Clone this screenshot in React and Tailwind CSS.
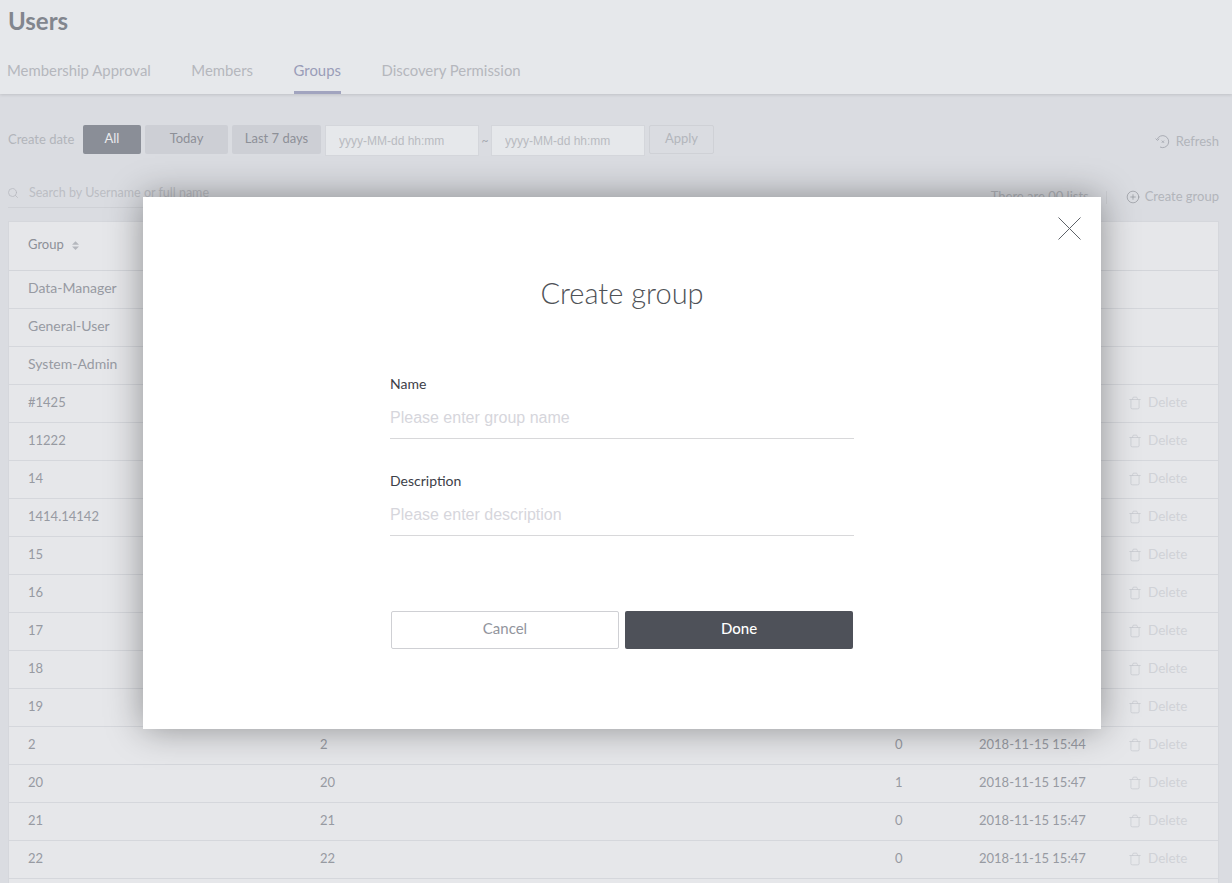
import { Search, CirclePlus, Trash } from 'lucide-react';

const tabs = ['Membership Approval', 'Members', 'Groups', 'Discovery Permission'];

const rows = [
  { name: 'Data-Manager', fixed: true },
  { name: 'General-User', fixed: true },
  { name: 'System-Admin', fixed: true },
  { name: '#1425' },
  { name: '11222' },
  { name: '14' },
  { name: '1414.14142' },
  { name: '15' },
  { name: '16' },
  { name: '17' },
  { name: '18' },
  { name: '19' },
  { name: '2', count: 0, date: '2018-11-15 15:44' },
  { name: '20', count: 1, date: '2018-11-15 15:47' },
  { name: '21', count: 0, date: '2018-11-15 15:47' },
  { name: '22', count: 0, date: '2018-11-15 15:47' },
];

function RefreshIcon() {
  return (
    <svg width="15" height="15" viewBox="0 0 15 15" fill="none" stroke="#a9acb4" strokeWidth="1">
      <path d="M2.2 5.2 A6 6 0 1 1 5 13" />
      <path d="M0.6 4.6 L2.4 6.4 L4.2 4.8" />
      <path d="M6.8 6.6 L9 8.8 M9 6.6 L6.8 8.8" />
    </svg>
  );
}

function SortIcon() {
  return (
    <svg width="7" height="9" viewBox="0 0 8 10" fill="#b4b7bd">
      <path d="M4 0 L8 4 L0 4 Z" />
      <path d="M4 10 L8 6 L0 6 Z" />
    </svg>
  );
}

function Field({ label, placeholder }) {
  return (
    <div className="flex flex-col">
      <label className="text-[14px] leading-[18px] text-[#3c4048]">{label}</label>
      <input
        placeholder={placeholder}
        className="h-[46px] border-b border-[#d8d8da] pt-[5px] font-['Liberation_Sans',sans-serif] text-[16px] outline-none placeholder:text-[#d6d6dc]"
      />
    </div>
  );
}

function CreateGroupModal() {
  return (
    <div className="absolute left-[143px] top-[197px] flex h-[532px] w-[958px] flex-col items-center bg-white shadow-[0_0_34px_rgba(0,0,0,0.38)]">
      <button className="absolute right-[20px] top-[20px]">
        <svg width="23" height="23" viewBox="0 0 23 23" stroke="#5f6369" strokeWidth="1">
          <path d="M0.5 0.5 L22.5 22.5 M22.5 0.5 L0.5 22.5" />
        </svg>
      </button>
      <h2 className="mt-[75px] text-[29px] font-light leading-[42px] text-[#4f5257]">Create group</h2>
      <div className="mt-[61px] flex w-[464px] flex-col gap-[33px]">
        <Field label="Name" placeholder="Please enter group name" />
        <Field label="Description" placeholder="Please enter description" />
      </div>
      <div className="mt-[75px] flex w-[462px] gap-[6px]">
        <button className="h-[38px] w-[228px] rounded-[2px] border border-[#cfd0d4] pb-[3px] text-[15px] text-[#92959d]">Cancel</button>
        <button className="h-[38px] w-[228px] rounded-[2px] bg-[#4e5159] pb-[3px] text-[15px] font-medium text-white">Done</button>
      </div>
    </div>
  );
}

export default function App() {
  return (
    <div className="relative h-[883px] w-full overflow-hidden bg-[#dadce1] font-['Lato',sans-serif]">
      {/* Header */}
      <div className="h-[94px] bg-[#e6e8eb] px-2 shadow-[0_1px_3px_rgba(0,0,0,0.12)]">
        <h1 className="text-[24px] font-bold leading-[41px] text-[#82868e]">Users</h1>
        <div className="mt-[9px] -ml-[1px] flex gap-[40.5px]">
          {tabs.map(tab => (
            <div
              key={tab}
              className={`h-[44px] pt-[9px] text-[14.9px] leading-[22px] ${
                tab === 'Groups' ? 'border-b-[3px] border-[#a1a4bf] text-[#9a9db8]' : 'text-[#b5b7bd]'
              }`}
            >
              {tab}
            </div>
          ))}
        </div>
      </div>

      {/* Date filter */}
      <div className="mt-[31px] flex h-[31px] items-start px-2">
        <span className="mr-[9px] w-[66px] whitespace-nowrap text-[13px] leading-[29px] text-[#b2b5bb]">Create date</span>
        <button className="h-[29px] w-[58px] rounded-[2px] bg-[#8a8e97] pb-[2px] text-[13px] text-[#e9eaed]">All</button>
        <button className="ml-[4px] h-[29px] w-[83px] rounded-[2px] bg-[#cdcfd5] pb-[2px] text-[13px] text-[#8d9098]">Today</button>
        <button className="ml-[4px] h-[29px] w-[89px] rounded-[2px] bg-[#cdcfd5] pb-[2px] text-[13px] text-[#8d9098]">Last 7 days</button>
        <input
          placeholder="yyyy-MM-dd hh:mm"
          className="ml-[4px] h-[31px] w-[154px] border border-[#d4d6db] bg-[#e6e8eb] px-[13px] font-['Liberation_Sans',sans-serif] text-[12px] outline-none placeholder:text-[#b9bbc1]"
        />
        <span className="w-[12px] text-center text-[12px] leading-[31px] text-[#a5a8af]">~</span>
        <input
          placeholder="yyyy-MM-dd hh:mm"
          className="h-[31px] w-[154px] border border-[#d4d6db] bg-[#e6e8eb] px-[13px] font-['Liberation_Sans',sans-serif] text-[12px] outline-none placeholder:text-[#b9bbc1]"
        />
        <button className="ml-[4px] h-[29px] w-[65px] rounded-[2px] border border-[#cfd1d6] pb-[2px] text-[13px] text-[#b3b6bc]">Apply</button>
        <div className="ml-auto mr-[5px] flex h-[33px] items-center gap-[6px] text-[13px] text-[#b2b5bb]">
          <RefreshIcon />
          Refresh
        </div>
      </div>

      {/* Search and actions */}
      <div className="mt-[29px] flex h-[36px] items-start pl-2 pr-[13px]">
        <div className="flex h-[23px] w-[400px] items-center gap-[10px] border-b border-[#cfd1d6] pb-[6px] text-[12.5px] text-[#bcbec4]">
          <Search size={12} strokeWidth={1.5} className="-ml-[1px] text-[#b5b7bd]" />
          Search by Username or full name
        </div>
        <span className="ml-auto mt-[2px] text-[13px] text-[#b2b5bb]">There are 00 lists</span>
        <div className="ml-[17px] mt-[6px] h-[13px] border-l border-[#cfd1d6]" />
        <div className="ml-[19px] mt-[2px] flex items-center gap-[5px] text-[13px] text-[#b2b5bb]">
          <CirclePlus size={14} strokeWidth={1} className="text-[#85888f]" />
          Create group
        </div>
      </div>

      {/* Table */}
      <div className="ml-2 mr-[13px] border border-[#d5d7dc] bg-[#e6e7ea]">
        <div className="flex h-[49px] items-center gap-[8px] border-b border-[#d3d5da] pb-[2px] pl-[19px] text-[13px] text-[#8d9098]">
          Group
          <SortIcon />
        </div>
        {rows.map(row => (
          <div key={row.name} className="flex h-[38px] items-center border-b border-[#d5d7dc] pb-[2px] text-[13px] text-[#979aa2]">
            <div className={`w-[311px] pl-[19px] ${row.fixed ? 'pb-[2px] text-[14px]' : ''}`}>{row.name}</div>
            <div className="w-[575px]">{row.name}</div>
            <div className="w-[84px]">{row.count}</div>
            <div className="w-[149px]">{row.date}</div>
            {!row.fixed && (
              <div className="flex items-center gap-[6px] text-[13.5px] text-[#d0d2d7]">
                <Trash size={14} strokeWidth={1.2} className="text-[#c6c8ce]" />
                Delete
              </div>
            )}
          </div>
        ))}
        {/* next row, cut off by the window */}
        <div className="h-[38px]" />
      </div>

      <CreateGroupModal />
    </div>
  );
}
